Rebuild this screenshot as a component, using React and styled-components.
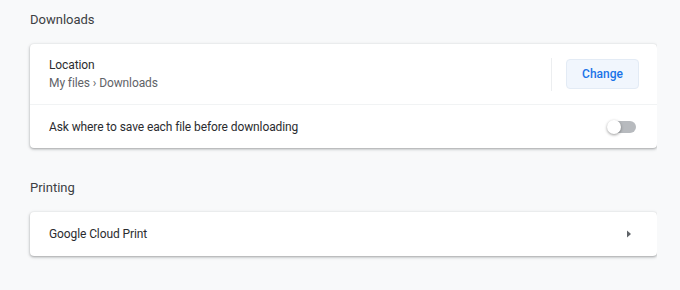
import React from 'react';
import styled, { createGlobalStyle } from 'styled-components';

const GlobalStyle = createGlobalStyle`
  html, body {
    margin: 0;
    padding: 0;
    background: #f8f9fa;
  }
  body {
    font-family: Roboto, "Liberation Sans", Arial, sans-serif;
    font-size: 12px;
    color: #202124;
    -webkit-font-smoothing: antialiased;
  }
`;

const Page = styled.div`
  width: 627px;
  padding-left: 30px;
  height: 290px;
  overflow: hidden;
`;

const Section = styled.section`
  & + & {
    margin-top: 20px;
  }
`;

const SectionTitle = styled.h2`
  margin: 0;
  padding: 12px 0 16px;
  font-size: 13px;
  line-height: 16px;
  font-weight: 400;
  color: #3c4043;
`;

const Card = styled.div`
  background: #fff;
  border-radius: 4px;
  box-shadow: 0 1px 2px 0 rgba(60, 64, 67, 0.3),
    0 1px 3px 1px rgba(60, 64, 67, 0.15);
`;

const Row = styled.div`
  display: flex;
  align-items: center;
  min-height: ${(p) => (p.$tall ? '60px' : '44px')};
  padding: 0 20px 0 19px;
  box-sizing: border-box;
  & + & {
    border-top: 1px solid #f1f3f4;
  }
`;

const Label = styled.div`
  flex: 1;
  display: flex;
  flex-direction: column;
  letter-spacing: -0.1px;
`;

const Primary = styled.span`
  line-height: 18px;
  color: #2b2c2f;
`;

const Secondary = styled.span`
  line-height: 18px;
  color: #5f6368;
`;

const Divider = styled.div`
  width: 1px;
  height: 33px;
  background: #eceef0;
  margin-right: 14px;
`;

const Button = styled.button`
  height: 30px;
  padding: 0 15px;
  border: 1px solid #e3ebf5;
  border-radius: 4px;
  background: #f1f6fd;
  color: #1a73e8;
  font-family: inherit;
  font-size: 12px;
  font-weight: 500;
  margin-right: -2px;
`;

const Toggle = styled.div`
  position: relative;
  width: 27px;
  height: 12px;
  border-radius: 6px;
  background: #b7babe;
  margin-right: 1px;
`;

const Knob = styled.div`
  position: absolute;
  left: -2px;
  top: -1px;
  width: 14px;
  height: 14px;
  border-radius: 50%;
  background: #fff;
  box-shadow: 0 1px 3px rgba(0, 0, 0, 0.4);
`;

const Arrow = styled.svg`
  width: 8px;
  height: 10px;
  margin-right: 4px;
`;

export default function App() {
  return (
    <>
      <GlobalStyle />
      <Page>
        <Section>
          <SectionTitle>Downloads</SectionTitle>
          <Card>
            <Row $tall>
              <Label>
                <Primary>Location</Primary>
                <Secondary>My files › Downloads</Secondary>
              </Label>
              <Divider />
              <Button>Change</Button>
            </Row>
            <Row>
              <Label>
                <Primary>Ask where to save each file before downloading</Primary>
              </Label>
              <Toggle>
                <Knob />
              </Toggle>
            </Row>
          </Card>
        </Section>
        <Section>
          <SectionTitle>Printing</SectionTitle>
          <Card>
            <Row>
              <Label>
                <Primary>Google Cloud Print</Primary>
              </Label>
              <Arrow viewBox="0 0 8 10">
                <path d="M2 1.5 L6 5 L2 8.5 Z" fill="#5f6368" />
              </Arrow>
            </Row>
          </Card>
        </Section>
        <Section>
          <SectionTitle>Accessibility</SectionTitle>
        </Section>
      </Page>
    </>
  );
}
